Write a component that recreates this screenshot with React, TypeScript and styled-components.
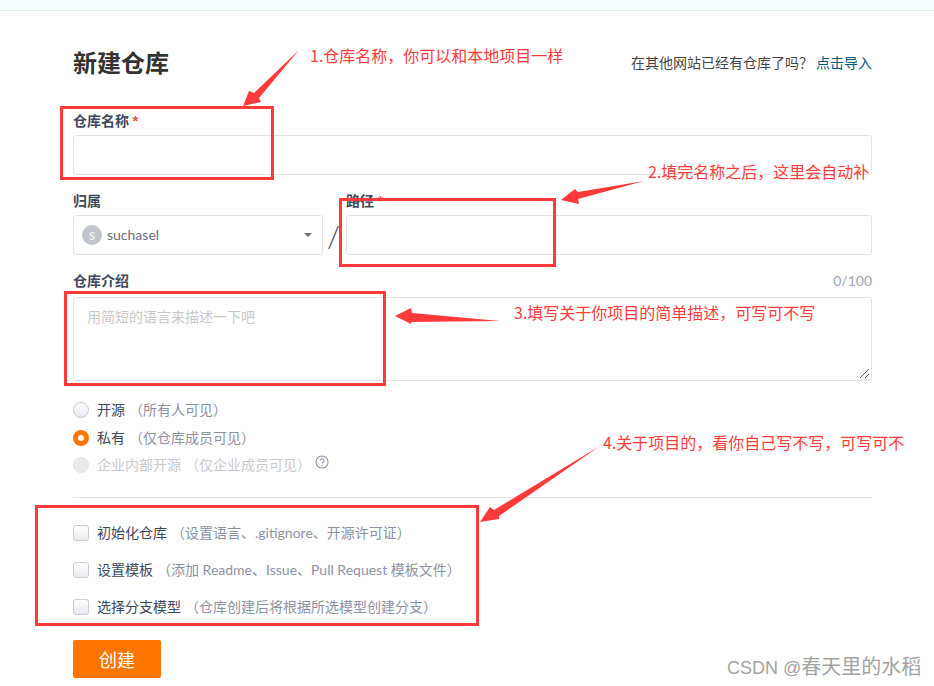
import styled, { createGlobalStyle } from "styled-components";

const GlobalStyle = createGlobalStyle`
  html, body {
    margin: 0;
    padding: 0;
    background: #fff;
  }
  * {
    box-sizing: border-box;
  }
  body {
    font-family: "Lato", "Noto Sans CJK SC", sans-serif;
    color: #40485b;
  }
`;

const Page = styled.div`
  position: relative;
  width: 934px;
  height: 686px;
  overflow: hidden;
`;

const TopStrip = styled.div`
  height: 11px;
  background: #f5fefe;
  border-bottom: 1px solid #e6eaec;
`;

const Form = styled.form`
  width: 799px;
  margin-left: 73px;
`;

const Header = styled.div`
  height: 95px;
  padding-top: 33px;
  display: flex;
  justify-content: space-between;
  align-items: flex-start;
`;

const Title = styled.h1`
  margin: 0;
  font-size: 24px;
  line-height: 38px;
  font-weight: 700;
  color: #333;
`;

const ImportHint = styled.div`
  font-size: 14px;
  line-height: 20px;
  margin-top: 9px;
  color: #444;
  a {
    color: #005980;
    text-decoration: none;
    margin-left: 3px;
  }
`;

const Label = styled.div`
  height: 29px;
  font-size: 14px;
  line-height: 29px;
  font-weight: 700;
  color: #40485b;
  display: flex;
  justify-content: space-between;
  em {
    font-style: normal;
    font-family: "Liberation Sans", sans-serif;
    font-size: 15px;
    color: #f5503c;
  }
`;

const DescLabel = styled(Label)`
  line-height: 25px;
`;

const Counter = styled.span`
  font-weight: 400;
  font-size: 14px;
  color: #a0a5b4;
`;

const Field = styled.div<{ $height: number }>`
  height: ${({ $height }) => $height}px;
  border: 1px solid #e0e3ea;
  border-radius: 3px;
  background: #fff;
  position: relative;
`;

const NameSection = styled.div`
  height: 80px;
`;

const PathSection = styled.div`
  display: flex;
  height: 82px;
`;

const OwnerCol = styled.div`
  width: 250px;
`;

const SlashCol = styled.div`
  width: 23px;
  padding: 29px 2px 0 0;
  font-size: 30px;
  line-height: 40px;
  font-weight: 300;
  color: #40485b;
  text-align: center;
`;

const PathCol = styled.div`
  flex: 1;
`;

const OwnerSelect = styled(Field)`
  display: flex;
  align-items: center;
  padding: 0 10px 0 8px;
  font-size: 14px;
  color: #6a7080;
`;

const OwnerName = styled.span`
  margin-top: -2px;
`;

const Avatar = styled.div`
  width: 20px;
  height: 20px;
  border-radius: 50%;
  background: #c0c6cc;
  color: #f2f4f5;
  font-size: 11px;
  font-weight: 700;
  display: flex;
  align-items: center;
  justify-content: center;
  margin-right: 5px;
`;

const Caret = styled.i`
  margin-left: auto;
  width: 0;
  height: 0;
  border-left: 4px solid transparent;
  border-right: 4px solid transparent;
  border-top: 4px solid #6a7080;
`;

const Placeholder = styled.div`
  padding: 9px 13px;
  font-size: 14px;
  line-height: 20px;
  color: #c8c8c8;
`;

const ResizeGrip = styled.svg`
  position: absolute;
  right: 1px;
  bottom: 1px;
`;

const DescSection = styled.div`
  height: 128px;
`;

const RadioGroup = styled.div`
  display: flex;
  flex-direction: column;
  height: 101px;
`;

const ChoiceRow = styled.label<{ $height: number; $muted?: boolean }>`
  display: flex;
  align-items: center;
  height: ${({ $height }) => $height}px;
  padding-bottom: 2px;
  font-size: 14px;
  color: ${({ $muted }) => ($muted ? "#c8cad0" : "#40485b")};
  small {
    font-size: 14px;
    color: ${({ $muted }) => ($muted ? "#c8cad0" : "#8c92a4")};
    margin-left: 4px;
  }
`;

const Radio = styled.span<{ $on?: boolean; $disabled?: boolean }>`
  width: 16px;
  height: 16px;
  border-radius: 50%;
  margin: 2px 8px 0 0;
  flex: none;
  border: ${({ $on, $disabled }) =>
    $on ? "5px solid #ff7500" : $disabled ? "1px solid #e0e2e6" : "1px solid #c8ccd4"};
  background: ${({ $on, $disabled }) =>
    $on
      ? "#fff"
      : $disabled
      ? "#e9eaec"
      : "linear-gradient(#fff, #e8eaf0)"};
`;

const HelpIcon = styled.svg`
  margin: -4px 0 0 4px;
`;

const Divider = styled.hr`
  margin: 0;
  border: 0;
  border-top: 1px solid #e2e3e6;
  height: 1px;
`;

const CheckGroup = styled.div`
  padding-top: 16px;
  height: 142px;
`;

const Checkbox = styled.span`
  width: 16px;
  height: 16px;
  border-radius: 3px;
  margin: 2px 8px 0 0;
  flex: none;
  border: 1px solid #c8ccd4;
  background: linear-gradient(#fff, #e8eaf0);
`;

const SubmitButton = styled.button`
  width: 88px;
  height: 38px;
  border: 0;
  border-radius: 2px;
  background: #ff7500;
  color: #fff;
  font-family: inherit;
  font-size: 18px;
  padding: 0;
`;

const Marker = styled.div<{ $x: number; $y: number; $w: number; $h: number }>`
  position: absolute;
  left: ${({ $x }) => $x}px;
  top: ${({ $y }) => $y}px;
  width: ${({ $w }) => $w}px;
  height: ${({ $h }) => $h}px;
  border: 3px solid #ff3a3a;
`;

const Note = styled.div<{ $x: number; $y: number }>`
  position: absolute;
  left: ${({ $x }) => $x}px;
  top: ${({ $y }) => $y}px;
  font-size: 16px;
  line-height: 22px;
  color: #ff3a3a;
  white-space: nowrap;
  font-family: "Noto Sans CJK SC", sans-serif;
`;

const ArrowLayer = styled.svg`
  position: absolute;
  left: 0;
  top: 0;
  pointer-events: none;
`;

const Watermark = styled.div`
  position: absolute;
  left: 727px;
  top: 653px;
  font-size: 18px;
  line-height: 26px;
  color: #a3a3a3;
  white-space: nowrap;
  font-family: "Liberation Sans", "Noto Sans CJK SC", sans-serif;
  span {
    font-size: 20px;
    font-family: "Noto Sans CJK SC", sans-serif;
  }
`;

const arrows = [
  "299,50 259,98 261,102 243,106 249,91 254,93",
  "644,181 578,199 579,204 561,200 575,189 578,192",
  "500,321 411,322 411,324 395,316 411,308 412,313",
  "600,446 499,516 499,519 480,522 490,507 494,510",
];

const App = () => {
  return (
    <Page>
      <GlobalStyle />
      <TopStrip />
      <Form>
        <Header>
          <Title>新建仓库</Title>
          <ImportHint>
            在其他网站已经有仓库了吗？<a href="#import">点击导入</a>
          </ImportHint>
        </Header>

        <NameSection>
          <Label>
            <span>
              仓库名称 <em>*</em>
            </span>
          </Label>
          <Field $height={40} />
        </NameSection>

        <PathSection>
          <OwnerCol>
            <Label>归属</Label>
            <OwnerSelect $height={40}>
              <Avatar>S</Avatar>
              <OwnerName>suchasel</OwnerName>
              <Caret />
            </OwnerSelect>
          </OwnerCol>
          <SlashCol>/</SlashCol>
          <PathCol>
            <Label>
              <span>
                路径 <em>*</em>
              </span>
            </Label>
            <Field $height={40} />
          </PathCol>
        </PathSection>

        <DescSection>
          <DescLabel>
            仓库介绍
            <Counter>0/100</Counter>
          </DescLabel>
          <Field $height={84}>
            <Placeholder>用简短的语言来描述一下吧</Placeholder>
            <ResizeGrip width="11" height="11" viewBox="0 0 11 11">
              <path d="M1 10 L10 1 M6 10 L10 6" stroke="#555" strokeWidth="1" />
            </ResizeGrip>
          </Field>
        </DescSection>

        <RadioGroup>
          <ChoiceRow $height={28}>
            <Radio />
            开源
            <small>（所有人可见）</small>
          </ChoiceRow>
          <ChoiceRow $height={28}>
            <Radio $on />
            私有
            <small>（仅仓库成员可见）</small>
          </ChoiceRow>
          <ChoiceRow $height={26} $muted>
            <Radio $disabled />
            企业内部开源
            <small>（仅企业成员可见）</small>
            <HelpIcon width="14" height="14" viewBox="0 0 15 15">
              <circle cx="7.5" cy="7.5" r="6.5" fill="none" stroke="#8c92a4" strokeWidth="1.1" />
              <path
                d="M5.6 6 a2 2 0 1 1 3 1.7 c-.7.4-1 .8-1 1.5"
                fill="none"
                stroke="#8c92a4"
                strokeWidth="1.1"
              />
              <circle cx="7.6" cy="11" r=".7" fill="#8c92a4" />
            </HelpIcon>
          </ChoiceRow>
        </RadioGroup>

        <Divider />

        <CheckGroup>
          <ChoiceRow $height={37}>
            <Checkbox />
            初始化仓库
            <small>（设置语言、.gitignore、开源许可证）</small>
          </ChoiceRow>
          <ChoiceRow $height={37}>
            <Checkbox />
            设置模板
            <small>（添加 Readme、Issue、Pull Request 模板文件）</small>
          </ChoiceRow>
          <ChoiceRow $height={37}>
            <Checkbox />
            选择分支模型
            <small>（仓库创建后将根据所选模型创建分支）</small>
          </ChoiceRow>
        </CheckGroup>

        <SubmitButton type="button">创建</SubmitButton>
      </Form>

      <Marker $x={60} $y={106} $w={214} $h={74} />
      <Marker $x={339} $y={198} $w={217} $h={69} />
      <Marker $x={64} $y={291} $w={322} $h={95} />
      <Marker $x={35} $y={505} $w={444} $h={121} />

      <ArrowLayer width="934" height="686" viewBox="0 0 934 686">
        {arrows.map((points) => (
          <polygon key={points} points={points} fill="#ff3a3a" />
        ))}
      </ArrowLayer>

      <Note $x={310} $y={44}>1.仓库名称，你可以和本地项目一样</Note>
      <Note $x={648} $y={160}>2.填完名称之后，这里会自动补</Note>
      <Note $x={514} $y={301}>3.填写关于你项目的简单描述，可写可不写</Note>
      <Note $x={603} $y={431}>4.关于项目的，看你自己写不写，可写可不</Note>

      <Watermark>
        CSDN @<span>春天里的水稻</span>
      </Watermark>
    </Page>
  );
};

export default App;
